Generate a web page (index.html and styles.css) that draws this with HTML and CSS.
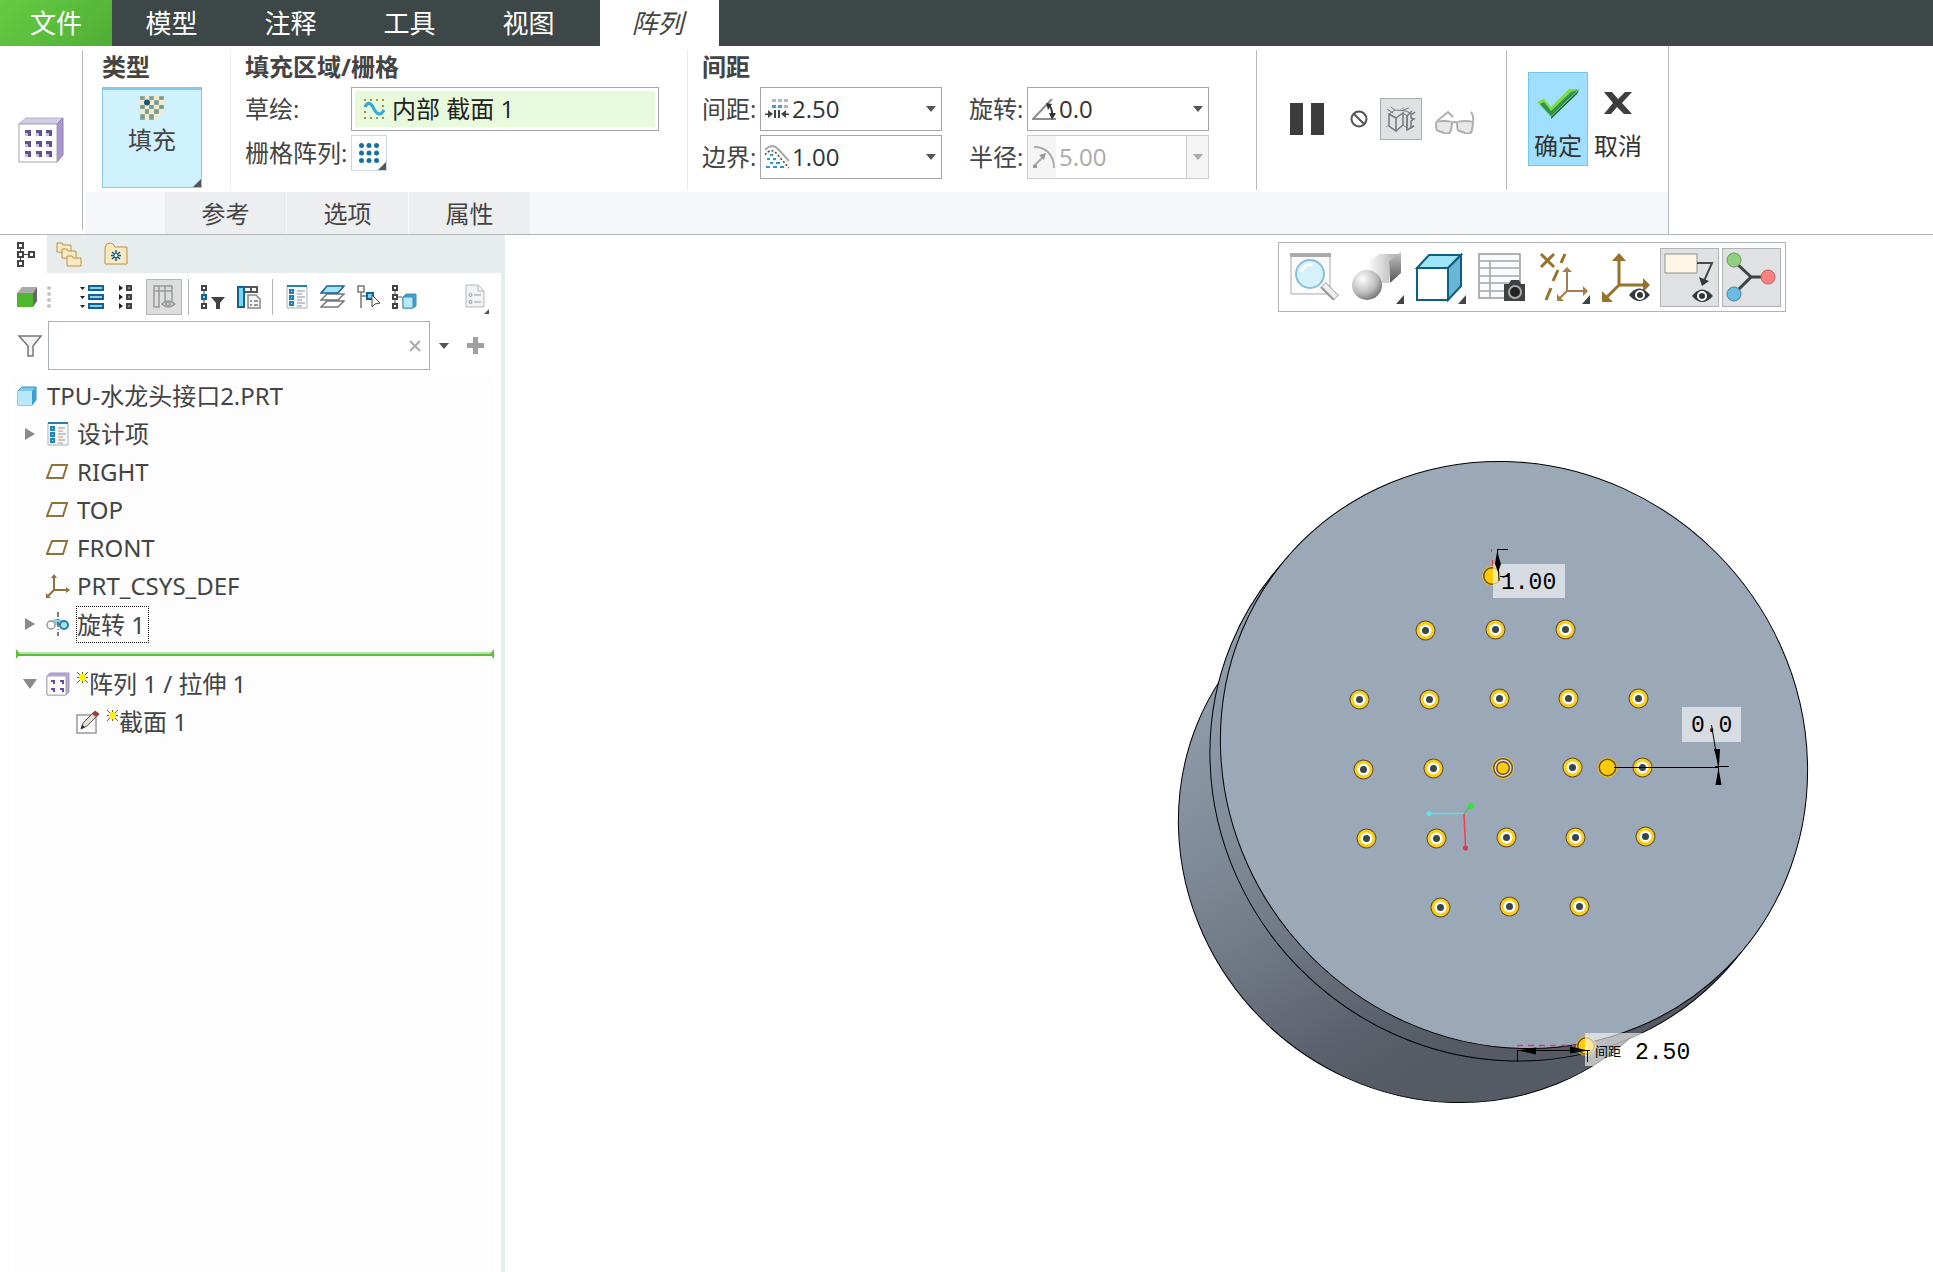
FILE: index.html
```html
<!DOCTYPE html>
<html lang="zh-CN">
<head>
<meta charset="utf-8">
<title>TPU-水龙头接口2.PRT</title>
<link rel="stylesheet" href="styles.css">
</head>
<body>
<nav class="menubar">
  <button class="menu file">文件</button>
  <button class="menu">模型</button>
  <button class="menu">注释</button>
  <button class="menu">工具</button>
  <button class="menu">视图</button>
  <button class="menu active">阵列</button>
</nav>

<header class="ribbon">
  <div class="feature">
    <svg width="46" height="46" viewBox="0 0 46 46">
      <path d="M1 7L8 1H45L39 7Z" fill="#d3cde4" stroke="#b7b0cb"/>
      <path d="M39 7L45 1V38L39 45Z" fill="#a995d0" stroke="#8d80ac"/>
      <rect x="1" y="7" width="38" height="38" fill="#fff" stroke="#a5a3b0"/>
      <g fill="#65508f"><path d="M7 13h6v6h-3v-3h-3zM18 13h6v6h-3v-3h-3zM28 13h6v6h-3v-3h-3zM7 24h6v6h-3v-3h-3zM18 24h6v6h-3v-3h-3zM28 24h6v6h-3v-3h-3zM7 34h6v6h-3v-3h-3zM18 34h6v6h-3v-3h-3zM28 34h6v6h-3v-3h-3z"/></g>
      <g fill="#c9bde2"><path d="M7 16h3v3h-3zM18 16h3v3h-3zM28 16h3v3h-3zM7 27h3v3h-3zM18 27h3v3h-3zM28 27h3v3h-3zM7 37h3v3h-3zM18 37h3v3h-3zM28 37h3v3h-3z"/></g>
    </svg>
  </div>
  <div class="ribbon-main">
    <div class="groups">
      <section class="group type">
        <h2>类型</h2>
        <button class="fill-btn corner">
          <svg width="24" height="24" viewBox="0 0 24 24">
            <path d="M0 0H24V15L15 24H0Z" fill="#f6e9c9"/>
            <g fill="#9aaf9d"><path d="M0 0h5v4H0zM9 0h5v4H9zM19 0h5v4h-5zM14 4h5v5h-5zM0 9h5v4H0zM9 9h5v4H9zM19 9h5v4h-5zM5 13h4v5H5zM14 13h5v5h-5zM0 18h5v6H0zM9 18h5v6H9z"/></g>
            <g fill="#6f9c96"><circle cx="2" cy="2" r="1.500"/><circle cx="11.500" cy="2" r="1.500"/><circle cx="21.500" cy="2" r="1.500"/><circle cx="16.500" cy="6.500" r="2"/><circle cx="2.500" cy="11" r="2"/><circle cx="11.500" cy="11" r="2"/><circle cx="21.500" cy="11" r="2"/><circle cx="7" cy="15.500" r="2"/><circle cx="16.500" cy="15.500" r="2"/><circle cx="2.500" cy="21" r="2"/><circle cx="11.500" cy="21" r="2"/></g>
            <circle cx="7" cy="6.500" r="3" fill="#14567a"/>
          </svg>
          <span>填充</span>
        </button>
      </section>
      <section class="group area">
        <h2>填充区域/栅格</h2>
        <div class="area-grid">
          <label for="sketch">草绘:</label>
          <div class="collector">
            <svg width="22" height="22" viewBox="0 0 22 22">
              <g fill="#b08d45"><path d="M1 1h2v2H1zM7 1h2v2H7zM13 1h2v2h-2zM19 1h2v2h-2zM1 7h2v2H1zM19 7h2v2h-2zM1 13h2v2H1zM1 19h2v2H1zM7 19h2v2H7zM13 19h2v2h-2zM19 19h2v2h-2z"/></g>
              <path d="M2 9C5 3 8 5 11 11S18 18 21 12" fill="none" stroke="#35a9d6" stroke-width="3"/>
            </svg>
            <input id="sketch" type="text" value="内部 截面 1" readonly>
          </div>
          <label for="gridtype">栅格阵列:</label>
          <button id="gridtype" class="grid-btn corner" aria-label="方形栅格">
            <svg width="20" height="20" viewBox="0 0 20 20" fill="#18709f"><circle cx="2.500" cy="2.500" r="2.500"/><circle cx="10" cy="2.500" r="2.500"/><circle cx="17.500" cy="2.500" r="2.500"/><circle cx="2.500" cy="10" r="2.500"/><circle cx="10" cy="10" r="2.500"/><circle cx="17.500" cy="10" r="2.500"/><circle cx="2.500" cy="17.500" r="2.500"/><circle cx="10" cy="17.500" r="2.500"/><circle cx="17.500" cy="17.500" r="2.500"/></svg>
          </button>
        </div>
      </section>
      <section class="group spacing">
        <h2>间距</h2>
        <div class="spacing-grid">
          <label for="pitch">间距:</label>
          <div class="combo">
            <svg width="24" height="24" viewBox="0 0 24 24">
              <g fill="#b3b7ba"><path d="M7 2h4v3H7zM13 2h4v3h-4zM19 2h4v3h-4zM19 8h4v3h-4z"/></g>
              <path d="M7 8h4v3H7zM13 8h4v3h-4z" fill="#3f9fd0"/>
              <path d="M0 16.500h3V13l5 4-5 4v-3H0zM24 16.500h-3V13l-5 4 5 4v-3h3zM9 13h2v8H9zM13 13h2v8h-2z" fill="#3f4446"/>
            </svg>
            <select id="pitch"><option>2.50</option></select>
          </div>
          <label class="second" for="rot">旋转:</label>
          <div class="combo">
            <svg width="24" height="24" viewBox="0 0 24 24" fill="none">
              <path d="M20 2L1 22H24" stroke="#8b8f91" stroke-width="2"/>
              <path d="M17 8Q21 13 20 19" stroke="#333" stroke-width="2"/>
              <path d="M14 6l6 1-4 6zM17 16h7l-4 7z" fill="#333"/>
            </svg>
            <select id="rot"><option>0.0</option></select>
          </div>
          <label for="border">边界:</label>
          <div class="combo">
            <svg width="24" height="24" viewBox="0 0 24 24" fill="none">
              <path d="M0 5Q7 -3 14 5L24 16" stroke="#a7aaac" stroke-width="2"/>
              <path d="M0 10Q6 2 12 9L24 23" stroke="#444" stroke-width="1.500" stroke-dasharray="2 2"/>
              <path d="M5 9h3v2H5zM2 13h3v2H2zM8 13h3v2H8zM5 17h3v2H5zM11 17h4v2h-4zM1 21h4v2H1zM8 21h4v2H8zM15 21h4v2h-4z" fill="#2f97c9"/>
            </svg>
            <select id="border"><option>1.00</option></select>
          </div>
          <label class="second" for="radius">半径:</label>
          <div class="combo disabled">
            <svg width="24" height="24" viewBox="0 0 24 24" fill="none" stroke="#aaa" stroke-width="2">
              <path d="M2 2C14 2 22 10 22 23M2 21L12 11"/><path d="M1 20h4v3H1zM7 10l7-2-2 7z" fill="#999" stroke="none"/>
            </svg>
            <select id="radius" disabled><option>5.00</option></select>
          </div>
        </div>
      </section>
      <section class="group tools">
        <button class="plain pause" aria-label="暂停"><svg width="34" height="32" viewBox="0 0 34 32"><path d="M0 0h13v32H0zM21 0h13v32H21z" fill="#3c3c3c"/></svg></button>
        <button class="plain none" aria-label="无预览"><svg width="18" height="18" viewBox="0 0 18 18" fill="none" stroke="#555" stroke-width="2"><circle cx="9" cy="9" r="7.500"/><path d="M4 4l10 10"/></svg></button>
        <button class="plain preview" aria-label="预览">
          <svg width="30" height="26" viewBox="0 0 30 26" fill="none" stroke="#777"><path d="M3 8l7 4v13l-7-5z" stroke-width="1.500"/><path d="M10 12l7-5v12l-7 6" stroke-width="1.500"/><path d="M3 8l6-4 11 1 6 3M9 4L5 1M17 4l6-2M1 3l6 4M17 19l4 3V10l-4-3" /><path d="M29 6l-4 3v3l3 1-3 2v6l3-1-7 4V10l5-5" stroke-width="1.500"/><path d="M0 21l4-3M13 5l5-4" stroke="#999"/></svg>
        </button>
        <button class="plain glasses" aria-label="校验">
          <svg width="40" height="24" viewBox="0 0 40 24" fill="#e8e8e8" stroke="#b0b0b0" stroke-width="2"><path d="M1 13q0-2 8-2t8 2-1 7-7 3-7-3-1-7zM22 13q0-2 8-2t8 2-1 7-7 3-7-3-1-7z"/><path d="M17 13q3-2 5 0M2 11L13 2l5 5M38 12q1-7-2-10" fill="none"/></svg>
        </button>
      </section>
      <section class="group finish">
        <button class="act ok">
          <svg width="44" height="32" viewBox="0 0 44 32"><path d="M1 15l7-3 7 8L33 2h11L15 30z" fill="#7fdc3a"/><path d="M4 17l4-2 7 9L35 5l7-2-27 26z" fill="#2c9450"/><path d="M15 30L43 3l-2 4-26 25z" fill="#1d5f38"/></svg>
          <span>确定</span>
        </button>
        <button class="act">
          <svg width="30" height="32" viewBox="0 0 30 32"><path d="M1 5h8l6 7 7-7h7L19 16l10 11h-8l-7-7-6 7H1l9-11z" fill="#3d3d3d"/></svg>
          <span>取消</span>
        </button>
      </section>
    </div>
    <div class="subtabs">
      <button>参考</button>
      <button>选项</button>
      <button>属性</button>
    </div>
  </div>
</header>

<main class="work">
  <aside class="navigator">
    <div class="nav-tabs">
      <button class="nav-tab on" aria-label="模型树"><svg width="18" height="26" viewBox="0 0 18 26" fill="none" stroke="#444" stroke-width="2"><path d="M1 2h5v5H1zM1 11h5v5H1zM1 20h5v5H1zM12 11h5v5h-5z"/><path d="M3.500 7v4M3.500 16v4M6 13.500h6" stroke-width="1"/></svg></button>
      <button class="nav-tab" aria-label="文件夹浏览器"><svg width="26" height="26" viewBox="0 0 26 26" fill="#fbe9c0" stroke="#b8924e"><path d="M1 11V2h5l1 2h8v8z"/><path d="M6 17V8h5l1 2h8v8z"/><path d="M11 24v-9h5l1 2h8v8H11z"/></svg></button>
      <button class="nav-tab" aria-label="收藏夹"><svg width="24" height="24" viewBox="0 0 24 24" fill="#fbe9c0" stroke="#b8924e"><path d="M1 22V5q1-4 5-4t5 4h12v17z"/><path d="M12 8v11M7 13.500h10M8 10l8 7M16 10l-8 7" stroke="#145e86" stroke-width="1.500"/><circle cx="12" cy="13.500" r="1.500" fill="#fff" stroke="none"/></svg></button>
    </div>
    <div class="nav-body">
      <div class="nav-tools">
        <svg class="cube" width="20" height="20" viewBox="0 0 20 20"><path d="M0 6L5 0h15l-4 6z" fill="#aaa"/><path d="M16 6l4-6v14l-4 6z" fill="#666"/><path d="M0 6h16v14H0z" fill="#4db82c"/></svg>
        <svg class="grip" width="4" height="22" viewBox="0 0 4 22" fill="#c4c4c4"><circle cx="2" cy="2" r="2"/><circle cx="2" cy="8" r="2"/><circle cx="2" cy="14" r="2"/><circle cx="2" cy="20" r="2"/></svg>
        <button class="ico expand" aria-label="全部展开"><svg width="24" height="24" viewBox="0 0 24 24"><path d="M0 2h5L2.500 5zM0 11h5l-2.500 3zM0 20h5l-2.500 3z" fill="#222"/><path d="M9 1h14v4H9zM9 10h14v4H9zM9 19h14v4H9z" fill="#7fd3f7" stroke="#14638c" stroke-width="2"/></svg></button>
        <button class="ico collapse" aria-label="全部折叠"><svg width="14" height="24" viewBox="0 0 14 24"><path d="M0 0v6l4-3zM0 9v6l4-3zM0 18v6l4-3z" fill="#222"/><path d="M8 1h4v4H8zM8 10h4v4H8zM8 19h4v4H8z" fill="#888" stroke="#444" stroke-width="2"/></svg></button>
        <button class="ico cols" aria-label="显示列"><svg width="24" height="24" viewBox="0 0 24 24" fill="none" stroke="#999" stroke-width="1.500"><path d="M2 1h18v5H2zM2 6v16h5V1M13 1v15M7 6v16M20 6v10"/><path d="M10 19q6-6 13 0-7 6-13 0z" fill="#ccc"/><circle cx="16" cy="19" r="2"/></svg></button>
        <button class="ico filt" aria-label="树过滤器"><svg width="24" height="24" viewBox="0 0 24 24"><path d="M3 5v14" stroke="#444"/><path d="M1 1h4v4H1zM1 19h4v4H1z" fill="#fff" stroke="#444" stroke-width="2"/><path d="M1 10h4v4H1z" fill="#7fd3f7" stroke="#14638c" stroke-width="2"/><path d="M10 12h14l-5 6v6h-4v-6z" fill="#444"/></svg></button>
        <button class="ico tcol" aria-label="树列"><svg width="24" height="24" viewBox="0 0 24 24"><path d="M1 2h19v5H1zM7 2v5M14 2v5" fill="#fff" stroke="#555" stroke-width="2"/><path d="M1 2h6v20H1z" fill="#7fd3f7" stroke="#14638c" stroke-width="2"/><path d="M11 10h8l4 4v9H11z" fill="#f4f4f4" stroke="#888" stroke-width="1.500"/><path d="M13 16h2M17 16h4M13 20h2M17 20h4" stroke="#777" stroke-width="1.500"/></svg></button>
        <button class="ico design" aria-label="设计项"><svg width="22" height="24" viewBox="0 0 22 24"><path d="M1 1h20v22H1z" fill="#f7fafc" stroke="#a9b1b6"/><path d="M1 1h20" stroke="#2a7eaa" stroke-width="2"/><path d="M4 5h3v3H4zM4 11h3v3H4zM4 17h3v3H4z" fill="#bfe6fa" stroke="#1f83bb" stroke-width="2"/><path d="M11 6h8M11 9h5M11 12h8M11 15h5M11 18h8M11 21h5" stroke="#8b9299"/></svg></button>
        <button class="ico layers" aria-label="层树"><svg width="25" height="24" viewBox="0 0 25 24" stroke-width="1.500"><path d="M1 22l6-6h17l-6 6zM1 15l6-6h17l-6 6z" fill="#fff" stroke="#777"/><path d="M1 8l6-7h17l-6 7z" fill="#a5e3fa" stroke="#14638c"/></svg></button>
        <button class="ico pick" aria-label="自动定位"><svg width="24" height="24" viewBox="0 0 24 24"><path d="M4 7v16M4 11h6" stroke="#777" stroke-width="1.500"/><path d="M1 1h6v6H1z" fill="#fff" stroke="#777" stroke-width="1.500"/><path d="M10 8h6v6h-6z" fill="#7fd3f7" stroke="#14638c" stroke-width="2"/><path d="M15 10v12l3-3 5-1z" fill="#fff" stroke="#444"/></svg></button>
        <button class="ico part" aria-label="快照"><svg width="25" height="24" viewBox="0 0 25 24"><path d="M3 5v14M5 12h5" stroke="#555"/><path d="M1 1h4v4H1zM1 10h4v4H1zM1 19h4v4H1z" fill="#fff" stroke="#444" stroke-width="2"/><path d="M11 12l3-3h10v12l-3 2H11z" fill="#3c9fd0" stroke="#3a8fb8"/><path d="M11 12h10v11H11z" fill="#b9e7fb" stroke="#3a8fb8"/></svg></button>
        <button class="ico report" aria-label="报告"><svg width="24" height="30" viewBox="0 0 24 30"><path d="M1 1h12l6 6v16H1z" fill="#f2f3f5" stroke="#b3b8bd"/><path d="M13 1v6h6" fill="none" stroke="#b3b8bd"/><g fill="none" stroke="#999"><circle cx="5.500" cy="11" r="1.500"/><circle cx="5.500" cy="18" r="1.500"/><path d="M9 11h7M9 18h7"/></g><path d="M24 25v5h-5z" fill="#555"/></svg></button>
      </div>
      <div class="search">
        <svg class="funnel" width="26" height="22" viewBox="0 0 26 22"><path d="M2 1h22l-8 10v10h-5V11z" fill="#f3f3f3" stroke="#777" stroke-width="1.500"/></svg>
        <div class="searchbox">
          <input type="text" aria-label="搜索">
          <button class="plain" aria-label="清除"><svg width="12" height="12" viewBox="0 0 12 12" stroke="#aaa" stroke-width="2"><path d="M1 1l10 10M11 1L1 11"/></svg></button>
        </div>
        <button class="plain drop" aria-label="搜索选项"><svg width="10" height="6" viewBox="0 0 10 6"><path d="M0 0h10L5 6z" fill="#555"/></svg></button>
        <button class="plain add" aria-label="添加"><svg width="18" height="18" viewBox="0 0 18 18"><path d="M6 0h5v6h6v5h-6v6H6v-6H0V6h6z" fill="#a0a0a0"/></svg></button>
      </div>
      <ul class="tree">
        <li class="root"><svg width="20" height="20" viewBox="0 0 20 20"><path d="M1 5l4-4h14v13l-4 5H1z" fill="#7ccbee" stroke="#3292c2"/><path d="M1 5h14v14H1z" fill="#b9e7fb"/><path d="M15 5l4-4v13l-4 5z" fill="#3c9fd0"/></svg>TPU-水龙头接口2.PRT</li>
        <li class="item"><span class="tw"><svg width="10" height="12" viewBox="0 0 10 12"><path d="M0 0v12l10-6z" fill="#8a8a8a"/></svg></span><svg class="ic" width="24" height="24" viewBox="0 0 24 24"><path d="M2 1h20v22H2z" fill="#f7fafc" stroke="#a9b1b6"/><path d="M2 1h20" stroke="#2a7eaa" stroke-width="2"/><path d="M5 5h3v3H5zM5 11h3v3H5zM5 17h3v3H5z" fill="#bfe6fa" stroke="#1f83bb" stroke-width="2"/><path d="M12 6h7M12 12h8M12 18h7" stroke="#8b9299"/><path d="M12 9h5M12 15h5M12 21h5" stroke="#d08a70"/></svg>设计项</li>
        <li class="item"><span class="tw"></span><svg class="ic" width="24" height="24" viewBox="0 0 24 24"><path d="M6 5h15l-4 13H1z" fill="#fff" stroke="#8f713c" stroke-width="2"/></svg>RIGHT</li>
        <li class="item"><span class="tw"></span><svg class="ic" width="24" height="24" viewBox="0 0 24 24"><path d="M6 5h15l-4 13H1z" fill="#fff" stroke="#8f713c" stroke-width="2"/></svg>TOP</li>
        <li class="item"><span class="tw"></span><svg class="ic" width="24" height="24" viewBox="0 0 24 24"><path d="M6 5h15l-4 13H1z" fill="#fff" stroke="#8f713c" stroke-width="2"/></svg>FRONT</li>
        <li class="item"><span class="tw"></span><svg class="ic" width="24" height="24" viewBox="0 0 24 24"><path d="M8 2v14h14M8 16l-6 6" fill="none" stroke="#8f713c" stroke-width="2"/><path d="M5 4l3-4 3 4zM20 13l4 3-4 3zM0 19v5h5z" fill="#8f713c"/></svg>PRT_CSYS_DEF</li>
        <li class="item"><span class="tw"><svg width="10" height="12" viewBox="0 0 10 12"><path d="M0 0v12l10-6z" fill="#8a8a8a"/></svg></span><svg class="ic" width="24" height="24" viewBox="0 0 24 24"><path d="M5 9q6-5 13 0v4H8z" fill="#8ed3f2"/><circle cx="5" cy="13" r="4" fill="#fff" stroke="#999" stroke-width="1.500"/><circle cx="18" cy="13" r="4" fill="#a8e1fa" stroke="#2580ad" stroke-width="2"/><path d="M12 0v24" stroke="#555" stroke-width="1.500" stroke-dasharray="5 2 1 2"/></svg><span class="focus">旋转 1</span></li>
        <li class="insert"><svg width="478" height="10" viewBox="0 0 478 10" preserveAspectRatio="none"><path d="M3 4h472" stroke="#b9e6a8" stroke-width="2"/><path d="M2 6h474" stroke="#5cbd3c" stroke-width="2"/><path d="M0 0l4 5-4 5zM478 0l-4 5 4 5z" fill="#5cbd3c"/></svg></li>
        <li class="item"><span class="tw"><svg width="14" height="10" viewBox="0 0 14 10"><path d="M0 0h14L7 10z" fill="#8a8a8a"/></svg></span><svg class="ic" width="24" height="24" viewBox="0 0 24 24"><path d="M1 4l3-3h19v19l-3 3H1z" fill="#b6a6d8" stroke="#a495c8"/><path d="M1 4h19v19H1z" fill="#fff" stroke="#aaa"/><path d="M5 8h4v4H7v-2H5zM14 8h4v4h-2v-2h-2zM5 16h4v4H7v-2H5zM14 16h4v4h-2v-2h-2z" fill="#6c45a8"/></svg><svg class="star" width="11" height="11" viewBox="0 0 11 11"><path d="M0 0l11 11M11 0L0 11M5.500 0v11M0 5.500h11" stroke="#666b20"/><circle cx="5.500" cy="5.500" r="3.500" fill="#fff100"/></svg>阵列 1 / 拉伸 1</li>
        <li class="item child"><span class="tw"></span><svg class="ic" width="24" height="24" viewBox="0 0 24 24"><path d="M1 5h19v18H1z" fill="#fff" stroke="#999" stroke-width="1.500"/><path d="M5 19l2-6L19 1l4 3L11 16z" fill="#e5dfd4" stroke="#555"/><path d="M19 1l4 3-3 3-4-3z" fill="#a33b34"/><path d="M5 19l1-4 3 2z" fill="#222"/></svg><svg class="star" width="11" height="11" viewBox="0 0 11 11"><path d="M0 0l11 11M11 0L0 11M5.500 0v11M0 5.500h11" stroke="#666b20"/><circle cx="5.500" cy="5.500" r="3.500" fill="#fff100"/></svg>截面 1</li>
      </ul>
    </div>
  </aside>

  <section class="viewport">
    <svg class="scene" viewBox="505 235 1428 1037" preserveAspectRatio="xMidYMid slice">
      <defs>
        <linearGradient id="side" gradientUnits="userSpaceOnUse" x1="1190" y1="720" x2="1400" y2="1080">
          <stop offset="0" stop-color="#8d9aaa"/><stop offset=".3" stop-color="#808b99"/><stop offset=".6" stop-color="#6d7581"/><stop offset=".85" stop-color="#5b616c"/><stop offset="1" stop-color="#555a64"/>
        </linearGradient>
        <linearGradient id="sideBody" href="#side" gradientTransform="rotate(-45 1445 836)"/>
        <linearGradient id="sideRim" href="#side" gradientTransform="rotate(-45 1504 767)"/>
        <g id="pt"><circle r="10" fill="#5f4c30"/><circle r="9" fill="#fbcf14"/><circle r="6" fill="#fff"/><circle r="3.500" fill="#3b4547"/></g>
        <g id="handle"><circle r="10" fill="#e9bd2a"/><circle r="9" fill="#6a552c"/><circle r="7.500" fill="#ffcb05"/></g>
      </defs>
      <g stroke="#000">
        <ellipse cx="1445" cy="836" rx="274" ry="259" transform="rotate(45 1445 836)" fill="url(#sideBody)"/>
        <ellipse cx="1504" cy="767" rx="301" ry="287" transform="rotate(45 1504 767)" fill="url(#sideRim)"/>
        <ellipse cx="1514" cy="755" rx="301" ry="286" transform="rotate(45 1514 755)" fill="#9ba8b8"/>
      </g>
      <g transform="translate(.5 .5)">
      <use href="#pt" x="1425" y="630"/><use href="#pt" x="1495" y="629"/><use href="#pt" x="1565" y="629"/>
      <use href="#pt" x="1359" y="699"/><use href="#pt" x="1429" y="699"/><use href="#pt" x="1499" y="698"/><use href="#pt" x="1568" y="698"/><use href="#pt" x="1638" y="698"/>
      <use href="#pt" x="1363" y="769"/><use href="#pt" x="1433" y="768"/><use href="#pt" x="1572" y="767"/><use href="#pt" x="1642" y="767"/>
      <use href="#pt" x="1366" y="838"/><use href="#pt" x="1436" y="838"/><use href="#pt" x="1506" y="837"/><use href="#pt" x="1575" y="837"/><use href="#pt" x="1645" y="836"/>
      <use href="#pt" x="1440" y="907"/><use href="#pt" x="1509" y="906"/><use href="#pt" x="1579" y="906"/>
      </g>
      <g transform="translate(1503 768)"><circle r="11" fill="#e9bd2a"/><circle r="10" fill="#6a552c"/><circle r="8.500" fill="#ddd"/><circle r="7" fill="#6a552c"/><circle r="5.500" fill="#ffcb05"/></g>

      <g fill="none" stroke-width="1.500">
        <path d="M1464 814L1470 806" stroke="#58b868"/><path d="M1430 813.500H1464" stroke="#5be6e6"/><path d="M1464 814L1465.500 847" stroke="#e0455a"/>
      </g>
      <circle cx="1471" cy="806" r="3" fill="#2fe83c"/><circle cx="1429" cy="813.500" r="2.500" fill="#5be6e6"/><circle cx="1465.500" cy="848" r="2.500" fill="#e0354a"/>

      <use href="#handle" x="1492" y="576"/>
      <path d="M1491.500 549v3M1492.500 560v6" stroke="#e0354a"/>
      <rect x="1493" y="564" width="72" height="34" fill="#fff" fill-opacity=".6"/>
      <path d="M1497 549.500H1508M1497.500 550L1499 581M1500 576.500H1508" fill="none" stroke="#000"/>
      <path d="M1497 552l4 12-3 8-3-8z"/>
      <text class="dim" x="1501" y="589">1.00</text>

      <use href="#handle" x="1607.500" y="767.500"/>
      <rect x="1682" y="707" width="59" height="35" fill="#fff" fill-opacity=".6"/>
      <path d="M1614 767.500H1718M1715 766.500H1729M1711.500 725L1718.500 767V780" fill="none" stroke="#000"/>
      <path d="M1714 749h6l-1 17zM1718.500 768l3 17h-6z"/>
      <text class="dim" x="1691" y="732">0.0</text>

      <use href="#handle" x="1586" y="1046"/>
      <path d="M1517 1045.500H1576" stroke="#e0356a" stroke-width="1.500" stroke-dasharray="6 5"/>
      <rect x="1585" y="1033" width="112" height="33" fill="#fff" fill-opacity=".6"/>
      <path d="M1517.500 1062V1050.500H1590M1587.500 1050V1062" fill="none" stroke="#000"/>
      <path d="M1518 1050.500l18-3v7zM1588 1050.500l-18-4v7z"/>
      <text class="note" x="1595" y="1056">间距</text>
      <text class="dim" x="1635" y="1059">2.50</text>
    </svg>

    <div class="viewbar">
      <button aria-label="重新调整"><svg viewBox="0 0 59 59"><path d="M3 6h39v40H3z" fill="#fafafa" stroke="#aaa"/><path d="M2 5h41v4H2z" fill="#aaa"/><path d="M35 37l13 13" stroke="#999" stroke-width="8"/><path d="M36 37l12 12" stroke="#f1f1f1" stroke-width="5"/><circle cx="22" cy="26" r="14" fill="#d5f1fc" stroke="#8bbfd6" stroke-width="2"/><path d="M13 24q3-8 12-8" fill="none" stroke="#fff" stroke-width="3"/></svg></button>
      <button aria-label="着色"><svg viewBox="0 0 59 59"><defs><radialGradient id="ball" cx=".35" cy=".3" r=".8"><stop offset="0" stop-color="#fff"/><stop offset=".6" stop-color="#bbb"/><stop offset="1" stop-color="#666"/></radialGradient><linearGradient id="box"><stop offset="0" stop-color="#fafafa"/><stop offset="1" stop-color="#aaa"/></linearGradient><linearGradient id="boxSide" x2="0" y2="1"><stop offset="0" stop-color="#c5c5c5"/><stop offset="1" stop-color="#555"/></linearGradient></defs><path d="M19 13l10-7h21L39 13v22H19z" fill="url(#box)"/><path d="M39 13L51 4v21L40 35z" fill="url(#boxSide)"/><circle cx="17" cy="37" r="15" fill="url(#ball)"/><path d="M54 47v9h-8z" fill="#444"/></svg></button>
      <button aria-label="显示样式"><svg viewBox="0 0 59 59" stroke="#0f5f80" stroke-width="2"><path d="M5 20L17 7h32L36 20z" fill="#9fe5fa"/><path d="M36 20L49 7v31L36 52z" fill="#68b5d6"/><path d="M5 20h31v32H5z" fill="#fff"/><path d="M54 47v9h-8z" fill="#444" stroke="none"/></svg></button>
      <button aria-label="已保存方向"><svg viewBox="0 0 59 59"><path d="M5 6h41v44H5z" fill="#f8fafb" stroke="#999" stroke-width="1.500"/><path d="M5 13h41M5 20h41M5 28h41M5 35h41M5 43h41M16 13v37" stroke="#a2a6a9" stroke-width="1.500"/><path d="M30 36h5l2-4h8l2 4h4v17H30z" fill="#3e4142"/><circle cx="41" cy="44" r="7" fill="#aaa"/><circle cx="41" cy="44" r="5" fill="#222"/></svg></button>
      <button aria-label="基准显示"><svg viewBox="0 0 59 59" fill="none" stroke="#967328" stroke-width="3"><path d="M5 6l13 13M18 6L5 19M29 6l-4 9M22 22l-5 11M15 40l-5 12"/><path d="M31 23v20h17M31 43l-8 8" stroke-width="2" stroke="#a67d4b"/><path d="M26 24l5-5 5 5zM47 38l5 5-5 5zM21 46v7h7z" fill="#a67d4b" stroke="none"/><path d="M54 47v9h-8z" fill="#444" stroke="none"/></svg></button>
      <button aria-label="坐标系显示"><svg viewBox="0 0 59 59" fill="none" stroke="#967328" stroke-width="3"><path d="M21 9v28h25M21 37L9 49"/><path d="M14 13l7-8 7 8zM45 30l7 7-7 7zM4 43v11h11z" fill="#967328" stroke="none"/><path d="M31 47q10-13 21 0-11 12-21 0z" fill="#333a3f" stroke="none"/><circle cx="42" cy="47" r="4" fill="#333" stroke="#fff" stroke-width="2"/></svg></button>
      <button class="on" aria-label="注释显示"><svg viewBox="0 0 59 59"><path d="M5 6h32v19H5z" fill="#fef6e4" stroke="#8f8f8f"/><path d="M37 15h15L44 33" fill="none" stroke="#444b50" stroke-width="2"/><path d="M39 29l10 4-7 5z" fill="#333a3f"/><path d="M32 48q10-13 21 0-11 12-21 0z" fill="#333a3f"/><circle cx="42" cy="48" r="4" fill="#333" stroke="#fff" stroke-width="2"/></svg></button>
      <button class="on" aria-label="旋转中心"><svg viewBox="0 0 59 59"><path d="M12 13l17 16-17 17M29 29h16" fill="none" stroke="#3d4448" stroke-width="3"/><circle cx="12" cy="12" r="7" fill="#8fcf7f" stroke="#659a5a"/><circle cx="46" cy="29" r="7" fill="#f9827f" stroke="#bd5f5c"/><circle cx="12" cy="46" r="7" fill="#6bbbe2" stroke="#4285a5"/></svg></button>
    </div>
  </section>
</main>
</body>
</html>
```
FILE: styles.css
```css
* { box-sizing: border-box; }

body {
  margin: 0;
  min-height: 100vh;
  display: flex;
  flex-direction: column;
  background: #fff;
  color: #444;
  font: 24px/26px "Open Sans", "Noto Sans CJK SC", sans-serif;
}

button, input, select {
  margin: 0;
  padding: 0;
  border: 0;
  background: none;
  color: inherit;
  font: inherit;
}

svg { display: block; flex: none; }

h2 { margin: 0 0 7px; font-size: 24px; line-height: 26px; font-weight: 700; }

.plain { display: flex; align-items: center; justify-content: center; }

/* menu bar */
.menubar { display: flex; height: 46px; background: #3d4747; }
.menu { width: 119px; color: #fff; font-size: 26px; line-height: 46px; }
.menu.file { width: 112px; background: linear-gradient(135deg, #66cc44, #4fae35); }
.menu.active { width: 119px; margin-left: 12px; padding-right: 4px; background: #fff; color: #444; font-style: italic; }

/* ribbon */
.ribbon { display: flex; border-bottom: 1px solid #b1b4b8; }
.feature {
  width: 83px;
  margin: 4px 0;
  display: flex;
  align-items: center;
  justify-content: center;
  border-right: 1px solid #b5b8bc;
}
.ribbon-main { width: 1586px; border-right: 1px solid #b5b8bc; }
.groups { display: flex; padding: 4px 0 2px; }
.group { padding: 4px 0 0 14px; height: 140px; border-right: 1px solid #b5b8bc; }
.group.type { width: 148px; padding-left: 19px; border-color: #ececec; }
.group.area { width: 457px; border-color: #ececec; }
.group.spacing { width: 569px; }
.group.tools { width: 250px; padding: 0 0 2px 33px; display: flex; align-items: center; }
.group.finish { padding: 0 0 2px 21px; flex: 1; display: flex; align-items: center; border: 0; }

.corner { position: relative; }
.corner::after {
  content: "";
  position: absolute;
  right: 0;
  bottom: 0;
  border: 4px solid #555;
  border-top-color: transparent;
  border-left-color: transparent;
}

.fill-btn {
  width: 100px;
  height: 101px;
  padding-top: 6px;
  display: flex;
  flex-direction: column;
  align-items: center;
  gap: 7px;
  border: 1px solid #84c9ec;
  border-top-width: 3px;
  background: #d0f1fe;
}

.area-grid { display: grid; grid-template-columns: 106px 308px; row-gap: 4px; align-items: center; }
.collector {
  height: 44px;
  padding: 3px;
  display: flex;
  border: 1px solid #a5a8a8;
  background: #fff;
}
.collector svg { width: 34px; height: 36px; padding: 7px 4px 7px 8px; background: #e8fadc; }
.collector input { flex: 1; min-width: 0; padding-left: 3px; background: #e8fadc; color: #222; }
.grid-btn {
  width: 36px;
  height: 36px;
  display: flex;
  align-items: center;
  justify-content: center;
  border: 1px solid #ccd8e4;
}

.spacing-grid { display: grid; grid-template-columns: 58px 182px 85px 182px; row-gap: 4px; align-items: center; }
.second { padding-left: 27px; }
.combo { position: relative; height: 44px; padding-left: 4px; display: flex; align-items: center; border: 1px solid #a5a5a5; }
.combo select { flex: 1; height: 42px; padding-left: 3px; appearance: none; color: #333; opacity: 1; }
.combo::after {
  content: "";
  position: absolute;
  right: 5px;
  top: 18px;
  border: 5px solid transparent;
  border-top: 6px solid #555;
  border-bottom: 0;
  pointer-events: none;
}
.combo.disabled { border-color: #ccc; background: linear-gradient(90deg, #f5f5f5 28px, #fff 28px 158px, #ccc 158px 159px, #f5f5f5 159px); }
.combo.disabled select { color: #aaa; }
.combo.disabled::after { border-top-color: #aaa; }

.none { margin-left: 26px; }
.preview { width: 42px; height: 42px; margin-left: 12px; border: 1px solid #a9adb1; background: #dfe1e3; }
.glasses { margin-left: 13px; padding-top: 5px; }
.act { width: 60px; height: 94px; padding-top: 14px; display: flex; flex-direction: column; align-items: center; gap: 14px; color: #333; border: 1px solid transparent; }
.act.ok { background: #a0dfff; border-color: #7bc4ea; }

.subtabs { display: flex; gap: 1px; height: 42px; margin-left: 2px; padding-left: 80px; background: #f6f7f9; }
.subtabs button { width: 121px; padding-top: 2px; background: #edeef0; }

/* navigator */
.work { flex: 1; display: flex; }
.navigator { width: 505px; display: flex; flex-direction: column; }
.nav-tabs { display: flex; height: 38px; background: #e7ecec; }
.nav-tab { width: 47px; padding-right: 3px; display: flex; align-items: center; justify-content: center; }
.nav-tab.on { padding: 0 0 0 4px; background: #fff; }
.nav-body { flex: 1; display: flex; flex-direction: column; border-right: 4px solid #e7ecee; }

.nav-tools { display: flex; align-items: center; height: 48px; padding-left: 17px; }
.grip { margin-left: 10px; }
.ico { display: flex; align-items: center; justify-content: center; height: 36px; }
.expand { margin-left: 29px; }
.collapse { margin-left: 15px; }
.cols { width: 36px; margin: 0 6px 0 13px; background: #dcdddd; border: 1px solid #b4b4b4; }
.filt { border-left: 1px solid #b5b5b5; padding-left: 12px; }
.tcol { margin-left: 12px; padding-right: 11px; border-right: 1px solid #b5b5b5; }
.design { margin-left: 13px; }
.layers { margin-left: 12px; }
.pick { margin-left: 12px; }
.part { margin-left: 11px; }
.report { margin-left: 48px; padding-top: 4px; }

.search { display: flex; align-items: center; padding-left: 17px; }
.searchbox { width: 382px; height: 49px; margin-left: 5px; padding-right: 8px; display: flex; border: 1px solid #a8b0b0; }
.searchbox input { flex: 1; min-width: 0; outline: 0; }
.drop { margin-left: 9px; }
.add { margin-left: 18px; }

.tree {
  flex: 1;
  margin: 7px 8px 0 13px;
  padding: 0;
  list-style: none;
  background: #fdfdfd;
  font-family: "Noto Sans", "Noto Sans CJK SC", sans-serif;
}
.tree li { display: flex; align-items: center; height: 38px; }
.root { padding-left: 4px; gap: 10px; }
.tw { width: 33px; display: flex; justify-content: center; }
.ic { margin-right: 7px; }
.star { margin: 0 1px 14px 0; }
.child { padding-left: 30px; }
.focus { height: 37px; line-height: 35px; margin-left: -1px; padding-right: 3px; border: 1px dotted #222; }
.tree .insert { height: 22px; padding: 0 0 0 3px; }

/* graphics area */
.viewport { position: relative; flex: 1; min-width: 0; overflow: hidden; }
.scene { position: absolute; width: 100%; height: 100%; }
.dim { font: 23px "Liberation Mono", monospace; fill: #000; }
.note { font: 13px "Noto Sans CJK SC", sans-serif; fill: #000; }

.viewbar {
  position: absolute;
  top: 7px;
  right: 147px;
  padding: 5px 4px 4px 9px;
  display: flex;
  gap: 3px;
  border: 1px solid #b0b4b8;
  background: #fff;
}
.viewbar button { width: 59px; height: 59px; }
.viewbar svg { width: 59px; height: 59px; }
.viewbar .on { background: #dfe1e3; outline: 1px solid #b0b4b8; outline-offset: -1px; }
```
